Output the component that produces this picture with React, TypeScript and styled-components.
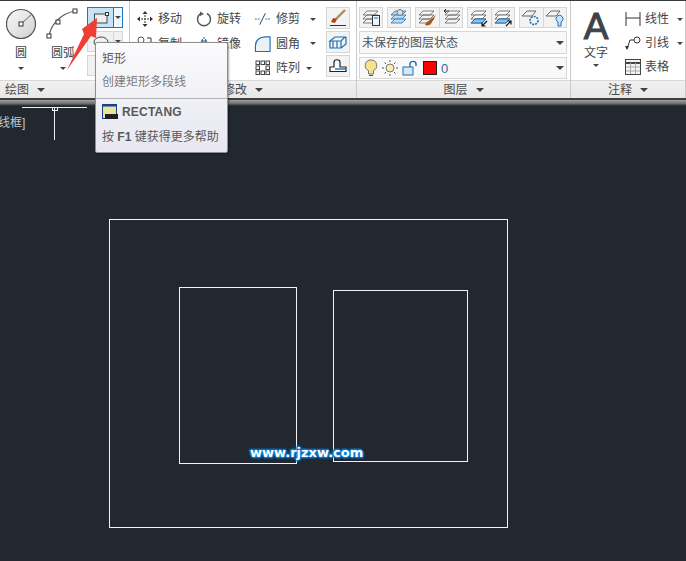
import React from 'react';
import styled, { createGlobalStyle } from 'styled-components';

const GlobalStyle = createGlobalStyle`
  html, body { margin: 0; padding: 0; background: #212830; }
  * { box-sizing: border-box; }
`;

const Page = styled.div`
  position: relative;
  width: 686px;
  height: 561px;
  overflow: hidden;
  display: flex;
  flex-direction: column;
  background: #212830;
  font-family: 'Liberation Sans', 'Noto Sans CJK SC', sans-serif;
  font-size: 12px;
  color: #454545;
`;

const Ribbon = styled.div`
  height: 98px;
  flex: none;
  display: flex;
  border-top: 1px solid #3a3a3a;
  background: #fff;
`;

const Panel = styled.section<{ $w: number }>`
  width: ${p => p.$w}px;
  flex: none;
  display: flex;
  flex-direction: column;
  border-right: 1px solid #c9c9c9;
`;

const PanelBody = styled.div`
  height: 79px;
  flex: none;
  display: flex;
  position: relative;
`;

const PanelTitle = styled.div<{ $left?: boolean }>`
  height: 18px;
  flex: none;
  display: flex;
  align-items: center;
  justify-content: ${p => (p.$left ? 'flex-start' : 'center')};
  gap: 8px;
  padding: 1px 0 0 ${p => (p.$left ? '5px' : '0')};
  background: linear-gradient(#f1f1f1, #e8e8e8);
  border-top: 1px solid #d8d8d8;
  font-size: 12px;
  line-height: 1;
  color: #4a4a4a;
`;

const Caret = styled.i`
  display: inline-block;
  flex: none;
  width: 0;
  height: 0;
  border-left: 3px solid transparent;
  border-right: 3px solid transparent;
  border-top: 3px solid #444;
`;

const TitleCaret = styled(Caret)`
  border-left-width: 4px;
  border-right-width: 4px;
  border-top-width: 4px;
`;

const Shelf = styled.div`
  height: 8px;
  flex: none;
  background: linear-gradient(#3f3f3f 0, #3f3f3f 22%, #9a9a9a 30%, #707070 70%, #3a3d41 88%, #22272d 100%);
`;

const Canvas = styled.div`
  position: relative;
  flex: 1;
  background: #212830;
`;

const BigTool = styled.div<{ $w: number; $gap?: number }>`
  width: ${p => p.$w}px;
  margin-left: ${p => p.$gap ?? 0}px;
  flex: none;
  display: flex;
  flex-direction: column;
  align-items: center;
  padding-top: 7px;
`;

const BigLabel = styled.span`
  line-height: 14px;
  margin-top: 6px;
  color: #444;
`;

const BigCaret = styled(Caret)`
  margin-top: 7px;
`;

const DrawPanelBody = styled(PanelBody)`
  padding-left: 5px;
`;

const SplitColumn = styled.div`
  display: flex;
  flex-direction: column;
  gap: 3px;
  padding: 6px 0 0 6px;
`;

const SplitButton = styled.div<{ $active?: boolean }>`
  width: 36px;
  height: 21px;
  display: flex;
  border: 1px solid ${p => (p.$active ? '#1a78c8' : '#d6d6d6')};
  background: ${p => (p.$active ? '#c6e4f7' : '#f1f1f1')};
`;

const SplitMain = styled.div`
  width: 25px;
  display: flex;
  align-items: center;
  justify-content: center;
`;

const SplitArrow = styled.div<{ $active?: boolean }>`
  flex: 1;
  display: flex;
  align-items: center;
  justify-content: center;
  border-left: 1px solid ${p => (p.$active ? '#1a78c8' : '#d6d6d6')};
  background: ${p => (p.$active ? '#eef7fd' : '#f1f1f1')};
`;

const ModifyGrid = styled.div`
  width: 196px;
  flex: none;
  display: grid;
  grid-template-columns: 59px 59px 71px;
  grid-auto-rows: 24.5px;
  padding: 6px 0 0 6px;
`;

const MiniTool = styled.div`
  display: flex;
  align-items: center;
  gap: 5px;
  white-space: nowrap;
  line-height: 1;
`;

const MiniIcon = styled.span`
  width: 17px;
  height: 17px;
  flex: none;
  display: flex;
  align-items: center;
  justify-content: center;
`;

const MiniCaret = styled(Caret)<{ $gap?: number }>`
  margin-left: ${p => p.$gap ?? 5}px;
`;

const SideColumn = styled.div`
  display: flex;
  flex-direction: column;
  gap: 2px;
  padding-top: 6px;
`;

const SideButton = styled.div`
  width: 24px;
  height: 22px;
  display: flex;
  align-items: center;
  justify-content: center;
  border: 1px solid #d6d6d6;
  background: #f3f3f3;
`;

const LayerBody = styled(PanelBody)`
  flex-direction: column;
  padding: 6px 0 0 2px;
  gap: 3px;
`;

const IconRow = styled.div`
  display: flex;
  gap: 4px;
`;

const IconGroup = styled.div<{ $w: number }>`
  width: ${p => p.$w}px;
  display: flex;
  border: 1px solid #d6d6d6;
  background: #f3f3f3;
`;

const LayerIcon = styled.div`
  flex: 1;
  height: 19px;
  display: flex;
  align-items: center;
  justify-content: center;
  & + & { border-left: 1px solid #d6d6d6; }
`;

const Combo = styled.div<{ $h: number }>`
  width: 208px;
  height: ${p => p.$h}px;
  display: flex;
  align-items: center;
  justify-content: space-between;
  padding: 0 2px;
  border: 1px solid #d6d6d6;
  background: #f8f8f8;
`;

const ComboText = styled.span`
  margin-top: -2px;
  color: #4a5560;
`;

const LayerState = styled.div`
  display: flex;
  align-items: center;
  gap: 4px;
  padding-left: 2px;
`;

const LayerNumber = styled.span`
  color: #34689c;
  font-size: 13px;
`;

const Swatch = styled.span`
  width: 14px;
  height: 14px;
  margin-left: 1px;
  background: #f00;
  border: 1px solid #222;
`;

const NoteBody = styled(PanelBody)`
  padding-left: 10px;
`;

const TextTool = styled.div`
  width: 30px;
  flex: none;
  display: flex;
  flex-direction: column;
  align-items: center;
`;

const BigA = styled.span`
  font-size: 37px;
  line-height: 34px;
  margin-top: 9px;
  color: #3f4347;
  -webkit-text-stroke: 1px #3f4347;
`;

const TextLabel = styled.span`
  margin-top: 2px;
  line-height: 14px;
`;

const TextCaret = styled(Caret)`
  margin-top: 4px;
`;

const NoteList = styled.div`
  display: flex;
  flex-direction: column;
  padding: 6px 0 0 13px;
`;

const NoteRow = styled(MiniTool)`
  height: 24px;
  gap: 3px;
`;

const NoteIcon = styled(MiniIcon)`
  width: 18px;
`;

const Tooltip = styled.div`
  position: absolute;
  left: 95px;
  top: 42px;
  width: 133px;
  height: 111px;
  border: 1px solid #8f8f8f;
  border-radius: 2px;
  background: linear-gradient(#fbfbfc, #e6e7f1);
  box-shadow: 1px 1px 2px rgba(0, 0, 0, 0.35);
  color: #585858;
  padding: 8px 6px 0;
`;

const TipTitle = styled.div`
  font-size: 12px;
  line-height: 16px;
`;

const TipDesc = styled.div`
  margin-top: 7px;
  line-height: 16px;
  color: #7b7b7b;
`;

const TipRule = styled.hr`
  margin: 8px -6px 0;
  border: 0;
  border-top: 1px solid #b4b4b4;
`;

const TipCommand = styled.div`
  display: flex;
  align-items: center;
  gap: 4px;
  margin-top: 5px;
  font-weight: 700;
  letter-spacing: 0.2px;
`;

const TipHelp = styled.div`
  margin-top: 9px;
  line-height: 16px;
  white-space: nowrap;
`;

const Bold = styled.b`
  font-weight: 700;
`;

const ViewLabel = styled.span`
  position: absolute;
  left: -2px;
  top: 7px;
  font-size: 12px;
  color: #c8c8c8;
`;

const Drawing = styled.svg`
  position: absolute;
  left: 0;
  top: 0;
`;

const Arrow = styled.svg`
  position: absolute;
  left: 62px;
  top: 14px;
`;

const Watermark = styled.span`
  position: absolute;
  left: 250px;
  top: 339px;
  font-family: 'DejaVu Sans', sans-serif;
  font-size: 13px;
  font-weight: 700;
  color: #fff;
  text-shadow: 0 0 2px #0b7fd0, 0 0 2px #0b7fd0, 1px 0 2px #0b7fd0, -1px 0 2px #0b7fd0, 0 1px 2px #0b7fd0, 0 -1px 2px #0b7fd0, 1px 1px 2px #0b7fd0, -1px -1px 2px #0b7fd0;
`;

const Stack = ({ c = '#666', fill = 'none', x = 0 }: { c?: string; fill?: string; x?: number }) => (
  <>
    {[3, 7, 11].map(y => (
      <path key={y} d={`M${x + 6} ${y}L${x + 2} ${y + 4}H${x + 13}L${x + 17} ${y}Z`} fill={fill} stroke={c} strokeWidth="0.8" />
    ))}
  </>
);

const Ico = ({ children, s = 20 }: { children: React.ReactNode; s?: number }) => (
  <svg width={s} height={s} viewBox={`0 0 ${s} ${s}`} fill="none">
    {children}
  </svg>
);

const App = () => (
  <Page>
    <GlobalStyle />
    <Ribbon>
      <Panel $w={130}>
        <DrawPanelBody>
          <BigTool $w={32}>
            <svg width="32" height="32" viewBox="0 0 32 32" fill="none">
              <defs>
                <linearGradient id="disc" x1="0" y1="0" x2="1" y2="1">
                  <stop offset="0" stopColor="#fafafa" />
                  <stop offset="1" stopColor="#cfcfcf" />
                </linearGradient>
              </defs>
              <circle cx="16" cy="16" r="14.5" fill="url(#disc)" stroke="#555" strokeWidth="1.2" />
              <path d="M16 16L27 6" stroke="#666" />
              <rect x="14" y="14" width="4" height="4" fill="#fff" stroke="#333" />
            </svg>
            <BigLabel>圆</BigLabel>
            <BigCaret />
          </BigTool>
          <BigTool $w={36} $gap={8}>
            <svg width="36" height="32" viewBox="0 0 36 32" fill="none">
              <path d="M4 29C5 18 15 5 31 3" stroke="#555" strokeWidth="1.2" />
              <rect x="2" y="26" width="4" height="4" fill="#fff" stroke="#333" />
              <rect x="11" y="12" width="4" height="4" fill="#fff" stroke="#333" />
              <rect x="28" y="1" width="4" height="4" fill="#fff" stroke="#333" />
            </svg>
            <BigLabel>圆弧</BigLabel>
            <BigCaret />
          </BigTool>
          <SplitColumn>
            <SplitButton $active>
              <SplitMain>
                <svg width="18" height="14" viewBox="0 0 18 14" fill="none">
                  <rect x="2.5" y="3" width="12.5" height="9" fill="#eee" stroke="#444" />
                  <rect x="13.5" y="1.5" width="3" height="3" fill="#fff" stroke="#333" />
                </svg>
              </SplitMain>
              <SplitArrow $active>
                <Caret />
              </SplitArrow>
            </SplitButton>
            <SplitButton>
              <SplitMain>
                <svg width="18" height="14" viewBox="0 0 18 14" fill="none">
                  <ellipse cx="9" cy="7" rx="7" ry="5" stroke="#444" />
                </svg>
              </SplitMain>
              <SplitArrow>
                <Caret />
              </SplitArrow>
            </SplitButton>
            <SplitButton>
              <SplitMain>
                <svg width="18" height="16" viewBox="0 0 18 16" fill="none">
                  <path d="M6 3V13M6 3H9M6 13H9" stroke="#444" />
                </svg>
              </SplitMain>
              <SplitArrow>
                <Caret />
              </SplitArrow>
            </SplitButton>
          </SplitColumn>
        </DrawPanelBody>
        <PanelTitle $left>
          绘图 <TitleCaret />
        </PanelTitle>
      </Panel>

      <Panel $w={227}>
        <PanelBody>
          <ModifyGrid>
            <MiniTool>
              <MiniIcon>
                <Ico s={16}>
                  <path d="M8 1V15M1 8H15" stroke="#333" strokeDasharray="2 1" />
                  <path d="M8 0L5.5 3H10.5ZM8 16L5.5 13H10.5ZM0 8L3 5.5V10.5ZM16 8L13 5.5V10.5Z" fill="#333" />
                </Ico>
              </MiniIcon>
              移动
            </MiniTool>
            <MiniTool>
              <MiniIcon>
                <Ico s={16}>
                  <path d="M5 2.5A6.5 6.5 0 1 0 11 2.5" stroke="#555" strokeWidth="1.5" />
                  <path d="M4 0.5L8 3L4 5Z" fill="#555" />
                </Ico>
              </MiniIcon>
              旋转
            </MiniTool>
            <MiniTool>
              <MiniIcon>
                <Ico s={18}>
                  <path d="M1 9H6M12 9H17" stroke="#1d6fb8" strokeDasharray="2 1" />
                  <path d="M6 15L12 3" stroke="#333" />
                </Ico>
              </MiniIcon>
              修剪
              <MiniCaret />
            </MiniTool>
            <MiniTool>
              <MiniIcon>
                <Ico s={16}>
                  <circle cx="4" cy="4" r="3" stroke="#555" />
                  <path d="M10 2H14V6" stroke="#333" />
                </Ico>
              </MiniIcon>
              复制
            </MiniTool>
            <MiniTool>
              <MiniIcon>
                <Ico s={16}>
                  <path d="M8 1V15" stroke="#555" strokeDasharray="2 1" />
                  <path d="M6.5 3L2 13H6.5ZM9.5 3L14 13H9.5Z" stroke="#3a78b8" />
                </Ico>
              </MiniIcon>
              镜像
            </MiniTool>
            <MiniTool>
              <MiniIcon>
                <Ico s={18}>
                  <path d="M1.5 17V11C1.5 5 6 1.5 12 1.5H17V17Z" fill="#eef1f4" stroke="#1f6fb5" strokeWidth="1.2" />
                </Ico>
              </MiniIcon>
              圆角
              <MiniCaret />
            </MiniTool>
            <MiniTool>
              <MiniIcon />
              缩放
            </MiniTool>
            <span />
            <MiniTool>
              <MiniIcon>
                <Ico s={16}>
                  {[1, 6, 11].flatMap(x =>
                    [1, 6, 11].map(y =>
                      x === 6 && y === 6 ? null : (
                        <rect key={`${x}-${y}`} x={x} y={y} width="3.5" height="3.5" stroke="#444" fill="#fff" />
                      )
                    )
                  )}
                </Ico>
              </MiniIcon>
              阵列
              <MiniCaret $gap={1} />
            </MiniTool>
          </ModifyGrid>
          <SideColumn>
            <SideButton>
              <Ico>
                <path d="M17 2L7 12" stroke="#b98a50" strokeWidth="2.4" />
                <path d="M9 11L5 10L3 14L7 15Z" fill="#b5431c" />
                <path d="M2 17.5H18" stroke="#333" />
              </Ico>
            </SideButton>
            <SideButton>
              <Ico>
                <path d="M2 9L7 5H17L13 9ZM2 9V16H13V9M13 16L18 12V5M5 9V16M9 9V16" stroke="#1d6fb8" strokeWidth="1.2" />
              </Ico>
            </SideButton>
            <SideButton>
              <Ico>
                <path d="M2 15.5V11H6V6C6 3 12 3 12 6V11H18V15.5Z" fill="#fff" stroke="#222" strokeWidth="1.2" />
                <path d="M7 13H18" stroke="#1d6fb8" strokeWidth="1.4" />
              </Ico>
            </SideButton>
          </SideColumn>
        </PanelBody>
        <PanelTitle>
          修改 <TitleCaret />
        </PanelTitle>
      </Panel>

      <Panel $w={214}>
        <LayerBody>
          <IconRow>
            <IconGroup $w={24}>
              <LayerIcon>
                <Ico>
                  <Stack />
                  <rect x="11.5" y="7.5" width="7" height="10" fill="#eef3f7" stroke="#333" />
                  <path d="M13 10H17" stroke="#1d6fb8" />
                </Ico>
              </LayerIcon>
            </IconGroup>
            <IconGroup $w={24}>
              <LayerIcon>
                <Ico>
                  <Stack c="#1d6fb8" fill="#bcdcf3" />
                  <circle cx="11" cy="4.5" r="3" fill="#ddd" stroke="#777" />
                </Ico>
              </LayerIcon>
            </IconGroup>
            <IconGroup $w={48}>
              <LayerIcon>
                <Ico>
                  <Stack />
                  <path d="M8 17C10 12 13 13 14 11L19 7L15 14C14 17 11 18 8 17Z" fill="#a9581a" />
                </Ico>
              </LayerIcon>
              <LayerIcon>
                <Ico>
                  <Stack x={2} />
                  <path d="M8 3H3M5 1L3 3L5 5" stroke="#222" />
                </Ico>
              </LayerIcon>
            </IconGroup>
            <IconGroup $w={48}>
              <LayerIcon>
                <Ico>
                  <Stack c="#555" fill="#fff" />
                  <path d="M6 11L2 15H13L17 11Z" fill="#8fc2ea" stroke="#1d6fb8" />
                  <path d="M18 13L13 18M13 14.5V18H16.5" stroke="#111" strokeWidth="1.2" />
                </Ico>
              </LayerIcon>
              <LayerIcon>
                <Ico>
                  <Stack c="#555" fill="#fff" />
                  <path d="M6 11L2 15H13L17 11Z" fill="#8fc2ea" stroke="#1d6fb8" />
                  <path d="M13 18L18 13M14.5 13H18V16.5" stroke="#111" strokeWidth="1.2" />
                </Ico>
              </LayerIcon>
            </IconGroup>
            <IconGroup $w={48}>
              <LayerIcon>
                <Ico>
                  <path d="M6 3H15L11 8H1Z" stroke="#666" />
                  <circle cx="13" cy="12.5" r="4" stroke="#1d6fb8" strokeDasharray="2 1" strokeWidth="1.6" />
                </Ico>
              </LayerIcon>
              <LayerIcon>
                <Ico>
                  <path d="M6 3H15L11 8H1Z" stroke="#666" />
                  <path d="M13 14A3.5 3.5 0 1 1 16 14V18H13Z" fill="#cfe3f4" stroke="#1d6fb8" />
                </Ico>
              </LayerIcon>
            </IconGroup>
          </IconRow>
          <Combo $h={23}>
            <ComboText>未保存的图层状态</ComboText>
            <TitleCaret />
          </Combo>
          <Combo $h={22}>
            <LayerState>
              <svg width="14" height="18" viewBox="0 0 14 18" fill="none">
                <path d="M7 1A5.5 5.5 0 0 0 4.5 11.5V15H9.5V11.5A5.5 5.5 0 0 0 7 1Z" fill="#f7e48a" stroke="#777" />
                <path d="M5 16.5H9" stroke="#555" />
              </svg>
              <svg width="16" height="18" viewBox="1 0 16 18" fill="none">
                <circle cx="9" cy="9" r="4" fill="#f8ecb0" stroke="#777" />
                <path d="M9 1V3M9 15V17M1 9H3M15 9H17M3.5 3.5L5 5M13 13L14.5 14.5M3.5 14.5L5 13M13 5L14.5 3.5" stroke="#555" />
              </svg>
              <svg width="16" height="16" viewBox="0 0 16 16" fill="none">
                <rect x="1" y="7" width="10" height="8" fill="#d5e8f6" stroke="#1d6fb8" />
                <path d="M8 7V4C8 0.5 14 0.5 14 4V6" stroke="#1d6fb8" strokeWidth="1.4" />
              </svg>
              <Swatch />
              <LayerNumber>0</LayerNumber>
            </LayerState>
            <TitleCaret />
          </Combo>
        </LayerBody>
        <PanelTitle>
          图层 <TitleCaret />
        </PanelTitle>
      </Panel>

      <Panel $w={115}>
        <NoteBody>
          <TextTool>
            <BigA>A</BigA>
            <TextLabel>文字</TextLabel>
            <TextCaret />
          </TextTool>
          <NoteList>
            <NoteRow>
              <NoteIcon>
                <svg width="16" height="16" viewBox="0 0 16 16" fill="none">
                  <path d="M1 1V15M15 1V15M1 7H15" stroke="#333" />
                </svg>
              </NoteIcon>
              线性
              <MiniCaret />
            </NoteRow>
            <NoteRow>
              <NoteIcon>
                <svg width="18" height="16" viewBox="0 0 18 16" fill="none">
                  <circle cx="13" cy="5" r="3" fill="#fff" stroke="#333" />
                  <path d="M10 5H6L3 14" stroke="#333" />
                  <path d="M1 11L3 15L5 11Z" fill="#333" />
                </svg>
              </NoteIcon>
              引线
              <MiniCaret />
            </NoteRow>
            <NoteRow>
              <NoteIcon>
                <svg width="16" height="16" viewBox="0 0 16 16" fill="none">
                  <rect x="0.5" y="0.5" width="15" height="15" fill="#f3f3f3" stroke="#444" />
                  <path d="M1 4H15" stroke="#444" strokeWidth="2" />
                  <path d="M1 8H15M1 12H15M5.5 4V15M10.5 4V15" stroke="#aaa" />
                </svg>
              </NoteIcon>
              表格
            </NoteRow>
          </NoteList>
        </NoteBody>
        <PanelTitle>
          注释 <TitleCaret />
        </PanelTitle>
      </Panel>
    </Ribbon>
    <Shelf />
    <Canvas>
      <ViewLabel>线框]</ViewLabel>
      <Drawing width="686" height="455" viewBox="0 106 686 455" fill="none">
        <path d="M22 107.5H87M54.5 107.5V140" stroke="#eee" />
        <rect x="52.5" y="107.5" width="5" height="3" stroke="#eee" />
        <rect x="109.5" y="219.5" width="398" height="308" stroke="#f2f2f2" />
        <rect x="179.5" y="287.5" width="117" height="176" stroke="#f2f2f2" />
        <rect x="333.5" y="290.5" width="134" height="171" stroke="#f2f2f2" />
      </Drawing>
      <Watermark>www.rjzxw.com</Watermark>
    </Canvas>
    <Tooltip>
      <TipTitle>矩形</TipTitle>
      <TipDesc>创建矩形多段线</TipDesc>
      <TipRule />
      <TipCommand>
        <svg width="16" height="16" viewBox="0 0 16 16" fill="none">
          <rect x="0.5" y="0.5" width="14" height="14" fill="#e8e59a" stroke="#1b3f8a" />
          <path d="M1 1.5H14" stroke="#1b3f8a" strokeWidth="2" />
          <rect x="3" y="10" width="13" height="5" fill="#222" />
        </svg>
        RECTANG
      </TipCommand>
      <TipHelp>
        按 <Bold>F1</Bold> 键获得更多帮助
      </TipHelp>
    </Tooltip>
    <Arrow width="40" height="60" viewBox="0 0 40 60" fill="none">
      <path d="M5 56L22 20L20 15L35 4L34 24L29 22Z" fill="#ef3e36" />
    </Arrow>
  </Page>
);

export default App;
